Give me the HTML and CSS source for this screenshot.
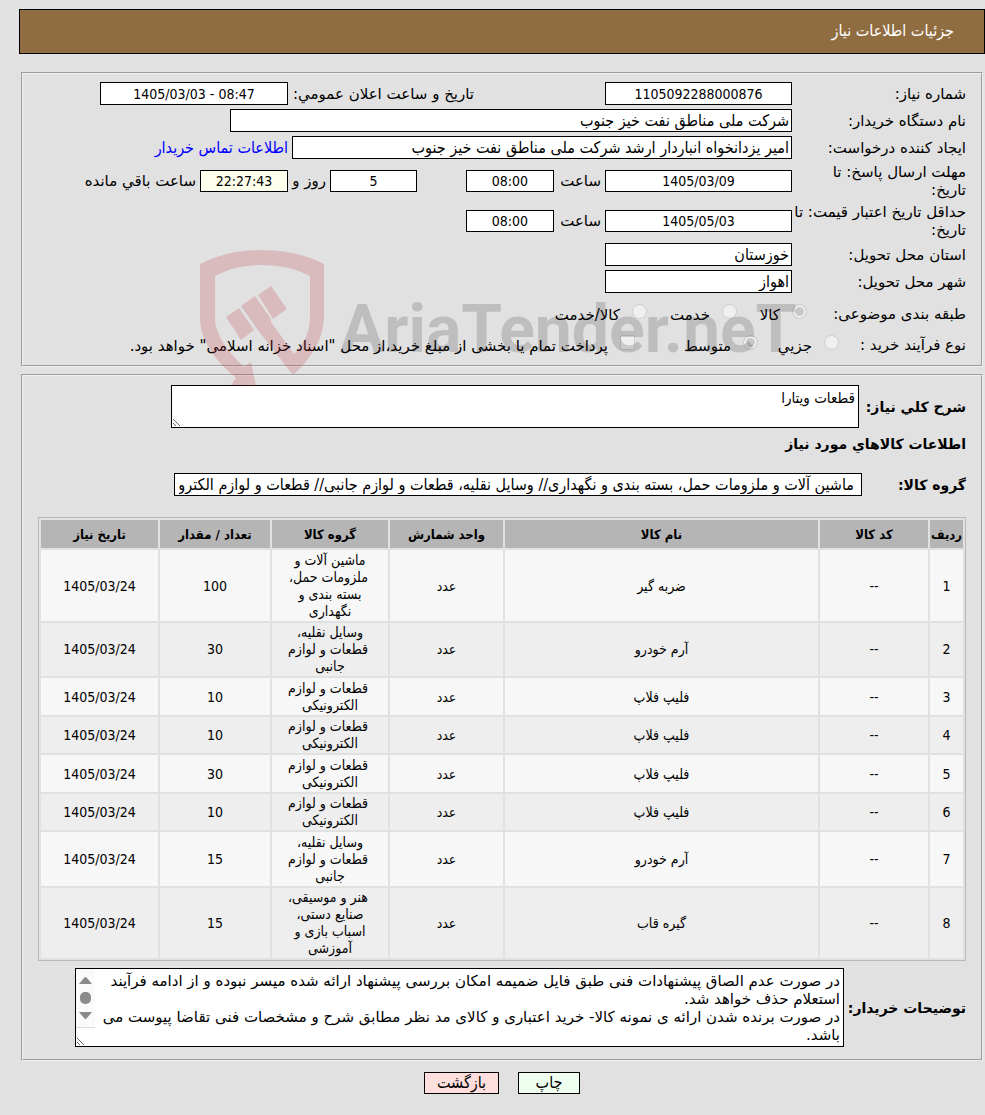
FILE: index.html
```html
<!DOCTYPE html>
<html lang="fa" dir="rtl">
<head>
<meta charset="utf-8">
<title>جزئیات اطلاعات نیاز</title>
<link rel="stylesheet" href="styles.css">
</head>
<body>
<header class="title-bar">جزئیات اطلاعات نیاز</header>
<main class="page">
  <fieldset class="panel details">
    <div class="row">
      <label class="name" for="need-no">شماره نیاز:</label>
      <input class="field mid" id="need-no" value="1105092288000876" readonly>
      <label class="announce" for="announce">تاریخ و ساعت اعلان عمومي:</label>
      <input class="field mid" id="announce" dir="ltr" value="1405/03/03 - 08:47" readonly>
    </div>
    <div class="row">
      <label class="name" for="org">نام دستگاه خریدار:</label>
      <input class="field org" id="org" value="شرکت ملی مناطق نفت خیز جنوب" readonly>
    </div>
    <div class="row">
      <label class="name" for="creator">ایجاد کننده درخواست:</label>
      <input class="field creator" id="creator" value="امیر یزدانخواه انباردار ارشد شرکت ملی مناطق نفت خیز جنوب" readonly>
      <a class="contact" href="#contact">اطلاعات تماس خریدار</a>
    </div>
    <div class="row tall">
      <label class="name" for="reply-date">مهلت ارسال پاسخ: تا<br>تاریخ:</label>
      <input class="field mid" id="reply-date" value="1405/03/09" readonly>
      <label class="hour" for="reply-hour">ساعت</label>
      <input class="field small" id="reply-hour" value="08:00" readonly>
      <input class="field small days" id="days" value="5" readonly>
      <label class="day" for="days">روز و</label>
      <input class="field small timer" id="left" value="22:27:43" readonly>
      <label class="left" for="left">ساعت باقي مانده</label>
    </div>
    <div class="row tall">
      <label class="name" for="price-date">حداقل تاریخ اعتبار قیمت: تا<br>تاریخ:</label>
      <input class="field mid" id="price-date" value="1405/05/03" readonly>
      <label class="hour" for="price-hour">ساعت</label>
      <input class="field small" id="price-hour" value="08:00" readonly>
    </div>
    <div class="row">
      <label class="name" for="state">استان محل تحویل:</label>
      <input class="field place" id="state" value="خوزستان" readonly>
    </div>
    <div class="row">
      <label class="name" for="city">شهر محل تحویل:</label>
      <input class="field place" id="city" value="اهواز" readonly>
    </div>
    <div class="row choices subject">
      <span class="name">طبقه بندی موضوعی:</span>
      <label class="choice c70"><input type="radio" name="subject" checked disabled><span>کالا</span></label>
      <label class="choice c90"><input type="radio" name="subject" disabled><span>خدمت</span></label>
      <label class="choice"><input type="radio" name="subject" disabled><span>کالا/خدمت</span></label>
    </div>
    <div class="row choices process">
      <span class="name">نوع فرآیند خرید :</span>
      <label class="choice c80"><input type="radio" name="process" disabled><span>جزیي</span></label>
      <label class="choice c123"><input type="radio" name="process" checked disabled><span>متوسط</span></label>
      <label class="choice"><input type="checkbox" disabled><span>پرداخت تمام یا بخشی از مبلغ خرید،از محل "اسناد خزانه اسلامی" خواهد بود.</span></label>
    </div>
    <div class="watermark" dir="ltr">
      <svg width="126" height="138" viewBox="0 0 126 138">
        <g fill="#c33540" fill-opacity=".22">
          <path d="M1 15Q28 1 63 1T125 15V70Q123 100 94 126L58 80 42 57 56 47 72 70V73L95 105Q111 89 111 68V27Q90 16 63 16T16 27V70Q17 92 45 118L52 113 57 137 32 136 37 129Q2 100 1 71Z"/>
          <path d="M27 68 40 59 55 81 42 91Z"/>
          <path d="M59 46 72 37 88 60 74 70Z"/>
        </g>
      </svg>
      <span class="brand">AriaTender.neT</span>
    </div>
  </fieldset>

  <fieldset class="panel goods">
    <div class="row summary">
      <label class="strong" for="summary">شرح کلي نیاز:</label>
      <textarea class="area short" id="summary" readonly>قطعات ویتارا</textarea>
    </div>
    <h2 class="heading">اطلاعات کالاهاي مورد نیاز</h2>
    <div class="row group">
      <label class="strong wide" for="group">گروه کالا:</label>
      <input class="field groups" id="group" value="ماشین آلات و ملزومات حمل، بسته بندی و نگهداری// وسایل نقلیه، قطعات و لوازم جانبی// قطعات و لوازم الکترونیکی" readonly>
    </div>
    <table class="items">
      <colgroup><col class="w-row"><col class="w-code"><col><col class="w-unit"><col class="w-group"><col class="w-qty"><col class="w-date"></colgroup>
      <thead><tr><th>ردیف</th><th>کد کالا</th><th>نام کالا</th><th>واحد شمارش</th><th>گروه کالا</th><th>تعداد / مقدار</th><th>تاریخ نیاز</th></tr></thead>
      <tbody>
        <tr><td>1</td><td>--</td><td>ضربه گیر</td><td>عدد</td><td>ماشین آلات و<br>ملزومات حمل،<br>بسته بندی و<br>نگهداری</td><td>100</td><td>1405/03/24</td></tr>
        <tr><td>2</td><td>--</td><td>آرم خودرو</td><td>عدد</td><td>وسایل نقلیه،<br>قطعات و لوازم<br>جانبی</td><td>30</td><td>1405/03/24</td></tr>
        <tr><td>3</td><td>--</td><td>فلیپ فلاپ</td><td>عدد</td><td>قطعات و لوازم<br>الکترونیکی</td><td>10</td><td>1405/03/24</td></tr>
        <tr><td>4</td><td>--</td><td>فلیپ فلاپ</td><td>عدد</td><td>قطعات و لوازم<br>الکترونیکی</td><td>10</td><td>1405/03/24</td></tr>
        <tr><td>5</td><td>--</td><td>فلیپ فلاپ</td><td>عدد</td><td>قطعات و لوازم<br>الکترونیکی</td><td>30</td><td>1405/03/24</td></tr>
        <tr><td>6</td><td>--</td><td>فلیپ فلاپ</td><td>عدد</td><td>قطعات و لوازم<br>الکترونیکی</td><td>10</td><td>1405/03/24</td></tr>
        <tr><td>7</td><td>--</td><td>آرم خودرو</td><td>عدد</td><td>وسایل نقلیه،<br>قطعات و لوازم<br>جانبی</td><td>15</td><td>1405/03/24</td></tr>
        <tr><td>8</td><td>--</td><td>گیره قاب</td><td>عدد</td><td>هنر و موسیقی،<br>صنایع دستی،<br>اسباب بازی و<br>آموزشی</td><td>15</td><td>1405/03/24</td></tr>
      </tbody>
    </table>
    <div class="row notes">
      <label class="strong" for="notes">توضیحات خریدار:</label>
      <div class="notes-box">
        <textarea class="area long" id="notes" readonly>در صورت عدم الصاق پیشنهادات فنی طبق فایل ضمیمه امکان بررسی پیشنهاد ارائه شده میسر نبوده و از ادامه فرآیند استعلام حذف خواهد شد.
در صورت برنده شدن ارائه ی نمونه کالا- خرید اعتباری و کالای مد نظر مطابق شرح و مشخصات فنی تقاضا پیوست می باشد.</textarea>
        <svg class="scroll" width="19" height="59" viewBox="0 0 19 59">
          <path fill="#fafafa" d="M0 0H19V59H0Z"/>
          <path fill="#8b8b8b" d="M3 15 8 9Q9.500 7 11 9L16 15ZM3 43H16L11 49Q9.500 51 8 49Z"/>
          <rect x="4" y="23" width="11" height="12" rx="5" fill="#8b8b8b"/>
          <path fill="#dcdcdc" d="M0 58H19V59H0Z"/>
        </svg>
      </div>
    </div>
  </fieldset>
  <div class="actions">
    <button class="btn print" type="button">چاپ</button>
    <button class="btn back" type="button">بازگشت</button>
  </div>
</main>
</body>
</html>
```

FILE: styles.css
```css
* { box-sizing: border-box; }
body {
  margin: 0;
  padding-top: 9px;
  background: #e1e1e1;
  color: #000;
  font: 16px/18px "DejaVu Sans Condensed", "DejaVu Sans", Tahoma, sans-serif;
}
input, textarea, button { font: inherit; color: inherit; }
.title-bar {
  margin-left: 19px;
  padding: 12px 30px 13px;
  border: 1px solid #000;
  background: #8f6d40;
  color: #fff;
}
.page { padding: 18px 2px 0 21px; }
.panel {
  position: relative;
  margin: 0;
  min-width: 0;
  border: 2px groove #f0f0f0;
  padding: 8px 15px 6px;
}
.row { display: flex; align-items: center; margin-bottom: 4px; }
.row label, .row .name { font-family: "DejaVu Sans", Tahoma, sans-serif; font-size: 15px; white-space: nowrap; }
.row .name { width: 174px; flex: none; }
.field {
  height: 23px;
  border: 1px solid #000;
  padding: 1px 2px;
  background: #fff;
  min-width: 0;
}
.mid, .small { text-align: center; font-size: 14px; }
.mid, .place { width: 187px; }
.org { width: 562px; }
.creator { width: 500px; }
.small { width: 88px; }
.tall .field { height: 22px; }
.timer { background: #ffffee; }
.announce { width: 186px; margin-right: 131px; }
.announce + .mid { width: 188px; }
.contact { margin-right: 4px; color: #00f; text-decoration: none; }
.tall { height: 36px; }
.hour { width: 51px; padding-right: 4px; }
.days { width: 87px; margin-right: 49px; }
.day { width: 42px; padding-right: 4px; }
.left { margin-right: 4px; }
.details { margin-bottom: 7px; }

.row.choices { height: 29px; margin-bottom: 2px; padding-top: 4px; }
.choice { display: flex; align-items: flex-start; gap: 12px; }
.choice span { padding-top: 2px; }
.row.choices .name { width: 159px; }
.row.process .name { width: 127px; }
.c70 { width: 70px; }
.c80 { width: 81px; }
.c90 { width: 90px; }
.c123 { width: 123px; }
.choice input {
  appearance: none;
  position: relative;
  z-index: 1;
  flex: none;
  width: 15px;
  height: 15px;
  margin: 0;
  border: 1px solid #cdcdcd;
  border-radius: 50%;
  background: #f0f0f0;
}
.choice input:checked { background: #c8c8c8; box-shadow: inset 0 0 0 2px #f0f0f0; }
.choice input[type="checkbox"] { border-radius: 2px; }

.watermark {
  position: absolute;
  z-index: 1;
  left: 176px;
  top: 175px;
  display: flex;
  pointer-events: none;
}
.brand {
  margin: 41px 0 0 15px;
  font: bold 66px/80px Roboto, "Liberation Sans", sans-serif;
  color: #000;
  opacity: .15;
  white-space: nowrap;
}

.goods { padding-top: 9px; padding-bottom: 12px; }
.row .strong, .heading { font: bold 14px/18px "DejaVu Sans", Tahoma, sans-serif; }
.strong { flex: none; }
.area {
  display: block;
  margin: 0;
  border: 1px solid #000;
  padding: 3px;
  background: #fff;
}
.summary { gap: 4px; margin-bottom: 7px; }
.summary .strong { width: 103px; }
.short { width: 688px; height: 43px; overflow: hidden; font-size: 15px; }
.heading { margin: 0 0 20px; }
.group { margin-bottom: 21px; }
.wide { width: 104px; }
.groups { width: 688px; padding-right: 7px; padding-left: 4px; }
.items {
  width: 100%;
  table-layout: fixed;
  border: 1px solid #b9b9b9;
  border-spacing: 2px;
  text-align: center;
  font-size: 14px;
  line-height: 17px;
}
.items th { height: 28px; padding: 0; background: #b5b5b5; font-size: 13px; white-space: nowrap; }
.items td { padding: 2px 20px 1px; background: #f7f7f7; white-space: nowrap; }
.items td:first-child { padding-left: 0; padding-right: 0; }
.items tr:nth-child(even) td { background: #eee; padding-top: 1px; }
.w-row { width: 33px; }
.w-code { width: 108px; }
.w-unit { width: 113px; }
.w-group { width: 116px; }
.w-qty { width: 110px; }
.w-date { width: 117px; }
.notes { margin: 7px 0 0; }
.notes .strong { width: 122px; }
.notes-box { position: relative; width: 769px; }
.long {
  width: 100%;
  height: 79px;
  padding-left: 22px;
  overflow: hidden;
  font-family: "DejaVu Sans", Tahoma, sans-serif;
  font-size: 15px;
}
.scroll { position: absolute; left: 1px; top: 1px; }

.actions {
  display: flex;
  justify-content: center;
  gap: 19px;
  margin-top: 11px;
  padding-bottom: 22px;
}
.btn { height: 22px; border: 1px solid #000; padding: 0; }
.print { width: 62px; background: #efffef; }
.back { width: 75px; background: #ffdede; }
```
